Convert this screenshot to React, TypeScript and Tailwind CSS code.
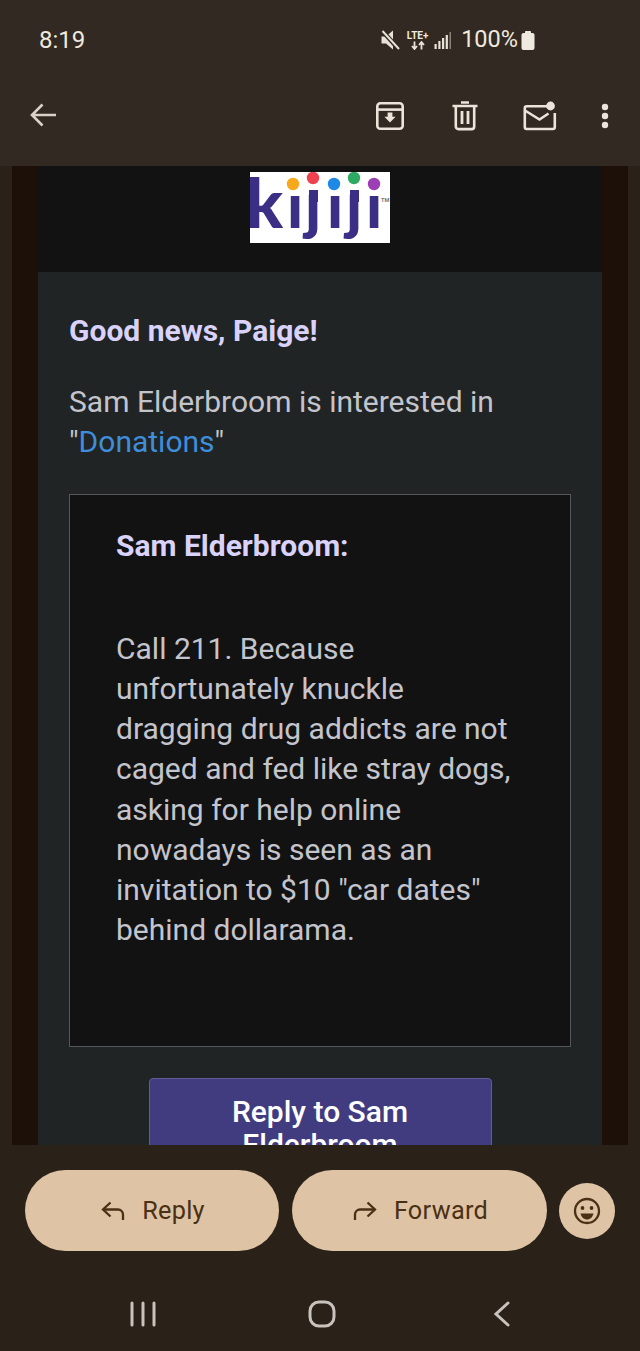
const iconStroke = "#ebe4da";

function Archive() {
  return (
    <svg width="30" height="30" viewBox="0 0 30 30" fill="none" stroke={iconStroke} strokeWidth="2.6">
      <rect x="2.300" y="2.300" width="25.400" height="25.400" rx="3" />
      <path d="M2.300 8.600H27.700" />
      <path d="M12.600 11.500h4.800v4.300h3.200L15 21.600l-5.600-5.800h3.200z" fill={iconStroke} stroke="none" />
    </svg>
  );
}
function Trash() {
  return (
    <svg width="26" height="30" viewBox="0 0 26 30" fill="none" stroke={iconStroke} strokeWidth="2.6">
      <path d="M0.500 5H25.500M9 1.500H17" />
      <path d="M3.800 5V25.500a2.600 2.600 0 0 0 2.600 2.600H19.600a2.600 2.600 0 0 0 2.600-2.600V5" />
      <path d="M10 10V23M16 10V23" strokeWidth="2.8" />
    </svg>
  );
}
function MailDot() {
  return (
    <svg width="34" height="30" viewBox="0 0 34 30" fill="none" stroke={iconStroke} strokeWidth="2.6">
      <path d="M26 5.300H3.800a2 2 0 0 0-2 2V26a2 2 0 0 0 2 2H29.800a2 2 0 0 0 2-2V12" />
      <path d="M2 9.500L16.500 18.500L25.500 12.500" />
      <circle cx="27.500" cy="5" r="4.400" fill={iconStroke} stroke="none" />
    </svg>
  );
}
function Dots() {
  return (
    <svg width="8" height="28" viewBox="0 0 8 28" fill={iconStroke}>
      <circle cx="4" cy="5" r="3.200" />
      <circle cx="4" cy="14" r="3.200" />
      <circle cx="4" cy="23" r="3.200" />
    </svg>
  );
}
function Back() {
  return (
    <svg width="28" height="26" viewBox="0 0 28 26" fill="none" stroke="#d8d2c8" strokeWidth="2.6">
      <path d="M27 13H3M13.500 2.500L3 13L13.500 23.500" />
    </svg>
  );
}
function Mute() {
  return (
    <svg width="19" height="20" viewBox="0 0 19 20">
      <path d="M0.500 6.500h4.500l7-6v19l-7-6H0.500z" fill="#e8e2d8" />
      <path d="M1 0.500l17 19" stroke="#322a22" strokeWidth="4.500" />
      <path d="M1.500 1l16.500 18" stroke="#e8e2d8" strokeWidth="2" />
    </svg>
  );
}
function Signal() {
  return (
    <svg width="18" height="19" viewBox="0 0 18 19" fill="#e8e2d8">
      <rect x="0.500" y="13" width="2.200" height="5" />
      <rect x="4.300" y="10" width="2.200" height="8" />
      <rect x="8" y="7" width="2.200" height="11" />
      <rect x="11.700" y="4" width="2.200" height="14" />
      <rect x="15.600" y="1" width="1.200" height="17" opacity="0.6" />
    </svg>
  );
}
function Battery() {
  return (
    <svg width="14" height="19" viewBox="0 0 14 19" fill="#efe9df">
      <rect x="4" y="0" width="6" height="3" rx="0.800" />
      <rect x="0.500" y="2" width="13" height="17" rx="2" />
    </svg>
  );
}
function LteArrows() {
  return (
    <svg width="14" height="9" viewBox="0 0 14 9" fill="none" stroke="#e8e2d8" strokeWidth="1.800">
      <path d="M3.500 0.500V7.500M1 5L3.500 8L6 5" />
      <path d="M10.500 8.500V1.500M8 4L10.500 1L13 4" />
    </svg>
  );
}
function ReplyIcon() {
  return (
    <svg width="24" height="20" viewBox="0 0 24 20" fill="none" stroke="#4a3015" strokeWidth="2.300">
      <path d="M9.500 1.500L2 8.500L9.500 15.500" />
      <path d="M2 8.500H17a5 5 0 0 1 5 5V19" />
    </svg>
  );
}
function ForwardIcon() {
  return (
    <svg width="24" height="20" viewBox="0 0 24 20" fill="none" stroke="#4a3015" strokeWidth="2.300">
      <path d="M14.500 1.500L22 8.500L14.500 15.500" />
      <path d="M22 8.500H7a5 5 0 0 0-5 5V19" />
    </svg>
  );
}
function Smile() {
  return (
    <svg width="28" height="28" viewBox="0 0 28 28" fill="none" stroke="#4a3015" strokeWidth="2.300">
      <circle cx="14" cy="14" r="12" />
      <circle cx="9.500" cy="11" r="1.900" fill="#4a3015" stroke="none" />
      <circle cx="18.500" cy="11" r="1.900" fill="#4a3015" stroke="none" />
      <path d="M7.500 16.500h13c-.8 3.800-3.400 6-6.500 6s-5.700-2.200-6.500-6z" fill="#4a3015" stroke="none" />
    </svg>
  );
}
function NavBars() {
  return (
    <svg width="26" height="26" viewBox="0 0 26 26" fill="none" stroke="#c8c4bd" strokeWidth="3" strokeLinecap="round">
      <path d="M2 2V24M13 2V24M24 2V24" />
    </svg>
  );
}
function NavHome() {
  return (
    <svg width="28" height="28" viewBox="0 0 28 28" fill="none" stroke="#c8c4bd" strokeWidth="3">
      <rect x="2" y="2" width="24" height="24" rx="9" />
    </svg>
  );
}
function NavBack() {
  return (
    <svg width="18" height="26" viewBox="0 0 18 26" fill="none" stroke="#c8c4bd" strokeWidth="3" strokeLinecap="round">
      <path d="M15 2L3 13L15 24" />
    </svg>
  );
}
function Kijiji() {
  return (
    <svg width="140" height="71" viewBox="250 172 140 71" className="block bg-white">
      <text y="228" fontFamily="Lato, sans-serif" fontWeight="900" fontSize="62" fill="#3a2f84">
        <tspan x="246" fontSize="68">
          k
        </tspan>
        <tspan x="287 305 327 346 366">ijiji</tspan>
      </text>
      <rect x="286" y="176" width="16" height="20" fill="#ffffff" />
      <rect x="327" y="176" width="16" height="20" fill="#ffffff" />
      <rect x="366" y="176" width="16" height="20" fill="#ffffff" />
      <rect x="304" y="176" width="17" height="14" fill="#ffffff" />
      <rect x="345" y="176" width="17" height="14" fill="#ffffff" />
      <rect x="309" y="190" width="9" height="12" fill="#3a2f84" />
      <rect x="350" y="190" width="9" height="12" fill="#3a2f84" />
      <circle cx="293" cy="184" r="6.200" fill="#f8a81c" />
      <circle cx="313" cy="178" r="6.200" fill="#f0414f" />
      <circle cx="334" cy="184" r="6.200" fill="#1e88e5" />
      <circle cx="354" cy="178" r="6.200" fill="#2eaa62" />
      <circle cx="374" cy="184" r="6.200" fill="#9c3fb5" />
      <text x="381" y="202" fontFamily="Roboto, sans-serif" fontSize="5.500" fontWeight="700" fill="#777777">
        TM
      </text>
    </svg>
  );
}

export default function App() {
  return (
    <div className="flex h-[1351px] w-[640px] flex-col overflow-hidden bg-[#2a2118] font-['Roboto',sans-serif]">
      <header className="h-[166px] shrink-0 bg-[#322a22]">
        <div className="flex h-[80px] items-center pl-[39px] pr-[105px] text-[#efe9df]">
          <span className="text-[24px] leading-none">8:19</span>
          <div className="ml-auto flex items-center">
            <Mute />
            <div className="ml-[6px] flex w-[23px] flex-col items-center">
              <span className="text-[10px] font-bold leading-[10px]">LTE+</span>
              <LteArrows />
            </div>
            <div className="ml-[5px]">
              <Signal />
            </div>
            <span className="ml-[9px] text-[23.5px] leading-none">100%</span>
            <div className="ml-[3px]">
              <Battery />
            </div>
          </div>
        </div>
        <div className="flex h-[70px] items-center pl-[29px] pr-[31px]">
          <Back />
          <div className="ml-auto flex items-center pt-[2px]">
            <Archive />
            <div className="ml-[47px]">
              <Trash />
            </div>
            <div className="ml-[45px]">
              <MailDot />
            </div>
            <div className="ml-[44px]">
              <Dots />
            </div>
          </div>
        </div>
      </header>

      <main className="flex-1 overflow-hidden px-3">
        <div className="h-full overflow-hidden bg-[#1c1008] px-[26px]">
          <div className="flex h-[106px] justify-center bg-[#121212] pt-[6px]">
            <div className="h-[71px]">
              <Kijiji />
            </div>
          </div>
          <div className="bg-[#202424] px-[31px] pt-[38px]">
            <h1 className="text-[30px] font-bold leading-[42px] text-[#d9d2fb]">Good news, Paige!</h1>
            <p className="mt-[30px] text-[30px] leading-[40px] text-[#c4c5cc]">
              Sam Elderbroom is interested in
              <br />"<span className="text-[#3f8ddb]">Donations</span>"
            </p>
            <div className="mt-[32px] h-[553px] border border-[#55585a] bg-[#121212] pl-[46px] pr-[47px] pt-[29px]">
              <p className="text-[30px] font-bold leading-[44px] text-[#d9d2fb]">Sam Elderbroom:</p>
              <p className="mt-[61px] text-[30px] leading-[40.15px] text-[#c4c5cc]">
                Call 211. Because unfortunately knuckle dragging drug addicts are not caged and fed like stray dogs,
                asking for help online nowadays is seen as an invitation to $10 "car dates" behind dollarama.
              </p>
            </div>
            <div className="mt-[31px] flex justify-center">
              <div className="w-[343px] rounded-[4px] border border-[#5f5c96] bg-[#413c80] px-10 pt-[16px] pb-4 text-center text-[30px] font-medium leading-[33px] text-white">
                Reply to Sam Elderbroom
              </div>
            </div>
          </div>
        </div>
      </main>

      <footer className="h-[206px] shrink-0">
        <div className="flex items-center pl-[25px] pr-[25px] pt-[25px]">
          <div className="flex h-[81px] w-[254px] items-center justify-center gap-[17px] rounded-full bg-[#dfc3a5] pl-[2px] text-[25.25px] tracking-[0.3px] text-[#4a3015]">
            <ReplyIcon />
            <span>Reply</span>
          </div>
          <div className="ml-[13px] flex h-[81px] w-[255px] items-center justify-center gap-[17px] rounded-full bg-[#dfc3a5] pl-[2px] text-[25.25px] tracking-[0.3px] text-[#4a3015]">
            <ForwardIcon />
            <span>Forward</span>
          </div>
          <div className="ml-[12px] flex h-[56px] w-[56px] items-center justify-center rounded-full bg-[#dfc3a5]">
            <Smile />
          </div>
        </div>
        <div className="mt-[49px] flex items-center pl-[130px]">
          <NavBars />
          <div className="ml-[152px]">
            <NavHome />
          </div>
          <div className="ml-[157px]">
            <NavBack />
          </div>
        </div>
      </footer>
    </div>
  );
}
